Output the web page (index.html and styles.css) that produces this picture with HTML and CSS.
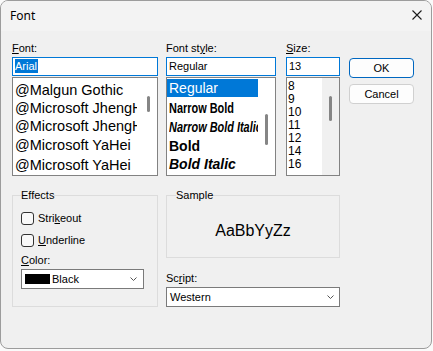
FILE: index.html
```html
<!DOCTYPE html>
<html lang="en">
<head>
  <meta charset="UTF-8">
  <meta name="viewport" content="width=device-width, initial-scale=1.0">
  <title>Font</title>
  <link rel="stylesheet" href="styles.css">
</head>
<body>
  <div class="window">
    <div class="titlebar">
      <span class="title">Font</span>
      <svg class="close" width="10" height="10" viewBox="0 0 10 10">
        <path d="M0.5 0.5 L9.5 9.5 M9.5 0.5 L0.5 9.5" stroke="#1b1b1b" stroke-width="1.1" fill="none"/>
      </svg>
    </div>

    <div class="content">
      <div class="top">
        <div class="col col-font">
          <label class="lbl"><u>F</u>ont:</label>
          <div class="field"><span class="sel">Arial</span></div>
          <div class="list">
            <ul class="items font-items">
              <li>@Malgun Gothic</li>
              <li>@Microsoft JhengHei</li>
              <li>@Microsoft JhengHei UI</li>
              <li class="tall">@Microsoft YaHei</li>
              <li class="tall">@Microsoft YaHei</li>
            </ul>
            <div class="scroll"><span class="thumb thumb-font"></span></div>
          </div>
        </div>

        <div class="col col-style">
          <label class="lbl">Font st<u>y</u>le:</label>
          <div class="field">Regular</div>
          <div class="list">
            <ul class="items style-items">
              <li class="active">Regular</li>
              <li class="narrow"><span>Narrow Bold</span></li>
              <li class="narrow italic"><span>Narrow Bold Italic</span></li>
              <li class="bold">Bold</li>
              <li class="bold italic">Bold Italic</li>
            </ul>
            <div class="scroll"><span class="thumb thumb-style"></span></div>
          </div>
        </div>

        <div class="col col-size">
          <label class="lbl"><u>S</u>ize:</label>
          <div class="field">13</div>
          <div class="list">
            <ul class="items size-items">
              <li>8</li>
              <li>9</li>
              <li>10</li>
              <li>11</li>
              <li>12</li>
              <li>14</li>
              <li>16</li>
            </ul>
            <div class="scroll scroll-grey"><span class="thumb thumb-size"></span></div>
          </div>
        </div>

        <div class="buttons">
          <button class="btn btn-default">OK</button>
          <button class="btn">Cancel</button>
        </div>
      </div>

      <div class="bottom">
        <fieldset class="group effects">
          <legend>Effects</legend>
          <div class="check first"><span class="box"></span><span>Stri<u>k</u>eout</span></div>
          <div class="check"><span class="box"></span><span><u>U</u>nderline</span></div>
          <label class="lbl color-lbl"><u>C</u>olor:</label>
          <div class="combo color-combo">
            <span class="swatch"></span>
            <span class="combo-text">Black</span>
            <svg class="chev" width="7" height="4" viewBox="0 0 7 4"><polyline points="0.5,0.5 3.5,3.5 6.5,0.5" fill="none" stroke="#555" stroke-width="1"/></svg>
          </div>
        </fieldset>

        <div class="right">
          <fieldset class="group sample">
            <legend>Sample</legend>
            <div class="sample-text">AaBbYyZz</div>
          </fieldset>
          <label class="lbl script-lbl">Sc<u>r</u>ipt:</label>
          <div class="combo script-combo">
            <span class="combo-text">Western</span>
            <svg class="chev" width="7" height="4" viewBox="0 0 7 4"><polyline points="0.5,0.5 3.5,3.5 6.5,0.5" fill="none" stroke="#555" stroke-width="1"/></svg>
          </div>
        </div>
      </div>
    </div>
  </div>
</body>
</html>
```

FILE: styles.css
```css
body {
  margin: 0;
  background: #fafafa;
  font-family: "Liberation Sans", Arial, sans-serif;
  font-size: 11px;
  color: #000;
}
.window {
  width: 430px;
  height: 347px;
  border: 1px solid #9c9c9c;
  border-radius: 8px;
  background: #f0f0f0;
  overflow: hidden;
}
.titlebar {
  height: 30px;
  background: #f3f3f3;
  display: flex;
  align-items: center;
  justify-content: space-between;
  padding: 0 9px;
}
.title {
  font-family: "Noto Sans", sans-serif;
  font-size: 12px;
  margin-top: -2px;
}
.close {
  margin-top: -2px;
}
.content {
  padding: 10px 0 0 11px;
}
.top {
  display: flex;
}
.col {
  display: flex;
  flex-direction: column;
}
.col-font { width: 146px; }
.col-style { width: 110px; margin-left: 8px; }
.col-size { width: 54px; margin-left: 10px; }
.lbl {
  display: block;
  line-height: 14px;
  height: 14px;
}
.field {
  margin-top: 2px;
  height: 19px;
  box-sizing: border-box;
  border: 1px solid #0078d7;
  background: #fff;
  padding: 0 2px;
  line-height: 17px;
}
.sel {
  background: #0078d7;
  color: #fff;
  padding: 1px 1px 1px 0;
}
.list {
  margin-top: 1px;
  height: 99px;
  box-sizing: border-box;
  border: 1px solid #828282;
  background: #fff;
  display: flex;
  overflow: hidden;
}
.items {
  flex: 1;
  min-width: 0;
  list-style: none;
  margin: 0;
  padding: 0;
}
.items li {
  white-space: nowrap;
  overflow: hidden;
  padding-left: 2px;
}
.scroll {
  width: 17px;
  flex: none;
  display: flex;
  justify-content: center;
}
.scroll-grey {
  background: #f0f0f0;
}
.thumb {
  width: 3px;
  background: #858585;
  border-radius: 2px;
}
.thumb-font { margin-top: 18px; height: 16px; }
.thumb-style { margin-top: 36px; height: 31px; }
.thumb-size { margin-top: 18px; height: 25px; }

.font-items {
  padding-top: 3px;
}
.font-items li {
  font-size: 14.5px;
  height: 18px;
  line-height: 18px;
  margin-right: 3px;
}
.font-items li.tall {
  height: 20px;
  line-height: 20px;
}

.style-items {
  padding-top: 1px;
}
.style-items li {
  font-size: 14px;
  height: 19px;
  line-height: 19px;
}
.style-items li.active {
  background: #0078d7;
  color: #fff;
  height: 18px;
  line-height: 18px;
}
.style-items li.narrow {
  font-weight: bold;
}
.style-items li.narrow span {
  display: inline-block;
  transform: scaleX(0.78);
  transform-origin: left center;
}
.style-items li.narrow:not(.italic) {
  height: 21px;
  line-height: 23px;
}
.style-items li.bold {
  font-weight: bold;
  height: 18px;
  line-height: 18px;
}
.style-items li.bold.italic {
  height: 19px;
  line-height: 19px;
}
.style-items li.italic {
  font-style: italic;
}

.size-items {
  padding-top: 2px;
}
.size-items li {
  font-size: 12px;
  height: 13px;
  line-height: 13px;
  padding-left: 1px;
}

.buttons {
  width: 65px;
  margin-left: 9px;
  display: flex;
  flex-direction: column;
  gap: 6px;
  padding-top: 17px;
}
.btn {
  height: 20px;
  box-sizing: border-box;
  border: 1px solid #d0d0d0;
  border-radius: 4px;
  background: #fdfdfd;
  font-family: "Liberation Sans", Arial, sans-serif;
  font-size: 11px;
  color: #000;
  padding: 0;
}
.btn-default {
  border-color: #0067c0;
}

.bottom {
  display: flex;
  gap: 8px;
  margin-top: 13px;
}
.group {
  margin: 0;
  border: 1px solid #dcdcdc;
  padding: 0 8px;
  min-width: 0;
  box-sizing: border-box;
}
.group legend {
  padding: 0;
  line-height: 13px;
}
.effects {
  width: 146px;
  padding-bottom: 16px;
}
.check {
  display: flex;
  align-items: center;
  gap: 4px;
  height: 13px;
  line-height: 13px;
  margin-top: 9px;
}
.check.first {
  margin-top: 10px;
}
.box {
  width: 13px;
  height: 13px;
  box-sizing: border-box;
  border: 1px solid #333;
  border-radius: 3px;
  background: #f9f9f9;
}
.color-lbl {
  margin-top: 6px;
}
.combo {
  margin-top: 2px;
  height: 20px;
  box-sizing: border-box;
  border: 1px solid #7a7a7a;
  background: #fff;
  display: flex;
  align-items: center;
}
.combo-text {
  flex: 1;
}
.color-combo {
  width: 123px;
  padding: 0 6px 0 3px;
}
.swatch {
  width: 25px;
  height: 10px;
  background: #000;
  margin-right: 2px;
}
.right {
  width: 174px;
  display: flex;
  flex-direction: column;
}
.sample {
  padding-bottom: 16px;
}
.sample legend {
  margin-left: 1px;
}
.sample-text {
  margin-top: 19px;
  text-align: center;
  font-size: 16px;
  line-height: 20px;
}
.script-lbl {
  margin-top: 13px;
}
.script-combo {
  padding: 0 5px 0 3px;
}
```
